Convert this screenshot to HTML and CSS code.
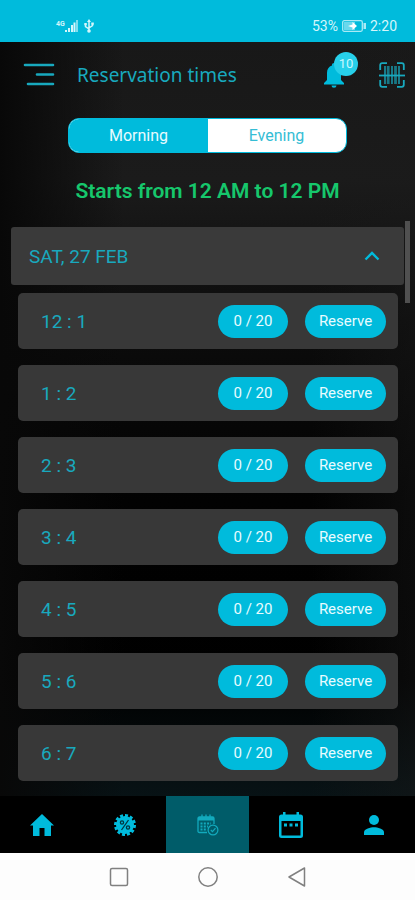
FILE: index.html
```html
<!DOCTYPE html>
<html lang="en">
<head>
<meta charset="utf-8">
<meta name="viewport" content="width=device-width, initial-scale=1">
<title>Reservation times</title>
<link rel="stylesheet" href="styles.css">
</head>
<body>
<div class="status">
  <div class="status-side">
    <span class="signal">
      <span class="net">4G</span>
      <svg width="13" height="12" viewBox="0 0 13 12" fill="currentColor"><path d="M0 10h2v2H0zM3 8h2v4H3zM6 5h2v7H6zM8.500 2.500h2v9.500h-2z"/><path d="M11 0h2v12h-2z" opacity=".6"/></svg>
    </span>
    <svg width="10" height="14" viewBox="0 0 10 14" fill="none" stroke="currentColor" stroke-width="1.500"><path d="M5 12V2M5 10L1.500 7.500V5M5 9l3.500-2.500V4"/><path d="M5 0l2 3H3z" fill="currentColor" stroke="none"/><circle cx="5" cy="12" r="1.800" fill="currentColor" stroke="none"/><path d="M.3 4h2.500v2.300H.3zM7.300 3.500h2.500v2.300H7.300z" fill="currentColor" stroke="none"/></svg>
  </div>
  <div class="status-side status-right">
    <span>53%</span>
    <svg width="24" height="12" viewBox="0 0 24 12"><rect x=".7" y=".7" width="19.600" height="10.600" rx="1.500" fill="none" stroke="currentColor" stroke-width="1.300" opacity=".8"/><path d="M2 2h11v8H2z" fill="currentColor" opacity=".5"/><path d="M21.500 3H24v6h-2.500z" fill="currentColor" opacity=".8"/><path d="M6 6l4.500-1.500V2L15 6l-4.500 4V7.500z" fill="#fff"/></svg>
    <span>2:20</span>
  </div>
</div>

<header class="bar">
  <button class="icon-btn" aria-label="Menu">
    <svg width="32" height="24" viewBox="0 0 32 24" stroke="currentColor" stroke-width="2.600" stroke-linecap="round"><path d="M2 2h28M14 11.500h16M5 21h25"/></svg>
  </button>
  <h1>Reservation times</h1>
  <button class="icon-btn bell" aria-label="Notifications">
    <svg width="20" height="25" viewBox="0 0 20 25" fill="currentColor"><path d="M10 0c-1.100 0-2 .8-2 1.800v.7C4.800 3.400 3 6.200 3 9.800V17L0 20v1.500h20V20l-3-3V9.800c0-3.600-1.800-6.400-5-7.300v-.7C12 .8 11.100 0 10 0zM7.500 22.500a2.500 2.300 0 0 0 5 0z"/></svg>
    <span class="badge">10</span>
  </button>
  <button class="icon-btn" aria-label="Scan code">
    <svg width="26" height="26" viewBox="0 0 26 26" fill="none" stroke="currentColor"><path d="M1.200 8V3.200q0-2 2-2H8M18 1.200h4.800q2 0 2 2V8M24.800 18v4.800q0 2-2 2H18M8 24.800H3.200q-2 0-2-2V18" stroke-width="1.800"/><path d="M6 4v18M13 4v18M20 4v18" stroke-width="1.700" opacity=".8"/><path d="M9.200 4v18M16.500 4v18" stroke-width="2.800" opacity=".65"/><path d="M0 13.500h26" stroke-width="1.800"/></svg>
  </button>
</header>

<main>
  <div class="toggle">
    <button class="on" aria-pressed="true">Morning</button>
    <button aria-pressed="false">Evening</button>
  </div>
  <p class="range">Starts from 12 AM to 12 PM</p>

  <section class="day">
    <button class="day-head" aria-expanded="true">
      <span>SAT, 27 FEB</span>
      <svg width="16" height="10" viewBox="0 0 16 10" fill="none" stroke="currentColor" stroke-width="2.400"><path d="M1.500 8.500L8 2l6.500 6.500"/></svg>
    </button>
    <ul class="slots">
      <li><span class="time">12 : 1</span><span class="pill count">0 / 20</span><button class="pill">Reserve</button></li>
      <li><span class="time">1 : 2</span><span class="pill count">0 / 20</span><button class="pill">Reserve</button></li>
      <li><span class="time">2 : 3</span><span class="pill count">0 / 20</span><button class="pill">Reserve</button></li>
      <li><span class="time">3 : 4</span><span class="pill count">0 / 20</span><button class="pill">Reserve</button></li>
      <li><span class="time">4 : 5</span><span class="pill count">0 / 20</span><button class="pill">Reserve</button></li>
      <li><span class="time">5 : 6</span><span class="pill count">0 / 20</span><button class="pill">Reserve</button></li>
      <li><span class="time">6 : 7</span><span class="pill count">0 / 20</span><button class="pill">Reserve</button></li>
    </ul>
    <span class="thumb"></span>
  </section>
</main>

<nav class="tabs">
  <a href="#home" aria-label="Home"><svg width="24" height="22" viewBox="0 0 24 22" fill="currentColor"><path d="M12 0L0 11.500h3V22h6.500v-8h5v8H21V11.500h3z"/></svg></a>
  <a href="#offers" aria-label="Offers"><svg width="22" height="22" viewBox="0 0 22 22"><circle cx="11" cy="11" r="9" fill="currentColor"/><circle cx="11" cy="11" r="9.500" fill="none" stroke="currentColor" stroke-width="3" pathLength="48" stroke-dasharray="2.400 1.600"/><g fill="none" stroke="#02363e" stroke-width="1.300"><path d="M14.500 6l-7 10"/><circle cx="8" cy="8.500" r="1.600"/><circle cx="14" cy="13.500" r="1.600"/></g></svg></a>
  <a href="#reservations" class="current" aria-label="Reservations" aria-current="page"><svg width="22" height="22" viewBox="0 0 22 22" fill="none" stroke="currentColor"><path d="M10 18.500H2.500Q1 18.500 1 17V4.500Q1 3 2.500 3h13Q17 3 17 4.500V10" stroke-width="1.300"/><path d="M1 3h16v3.500H1z" fill="currentColor" stroke="none"/><path d="M5 .5V4M9 .5V4M13 .5V4" stroke-width="1.300"/><path d="M3.500 9.500H14M3.500 12.500H11M3.500 15.500H10" stroke-width="1.800" stroke-dasharray="2 1.300"/><circle cx="16" cy="16" r="4.900" stroke-width="1.200"/><path d="M13.800 16l1.700 1.700 3-3.500" stroke-width="1.200"/></svg></a>
  <a href="#calendar" aria-label="Calendar"><svg width="24" height="26" viewBox="0 0 24 26" fill="currentColor"><path fill-rule="evenodd" d="M4 0h2.500v2.500h11V0H20v2.500h1.500A2.500 2.500 0 0 1 24 5v18.500a2.500 2.500 0 0 1-2.500 2.500h-19A2.500 2.500 0 0 1 0 23.500V5a2.500 2.500 0 0 1 2.500-2.500H4zM2.500 9v14.500h19V9z"/><path d="M5 11.500h3v3H5zM10.500 11.500h3v3h-3zM16 11.500h3v3h-3z"/></svg></a>
  <a href="#profile" aria-label="Profile"><svg width="20" height="20" viewBox="0 0 22 22" fill="currentColor"><circle cx="11" cy="5.500" r="5.500"/><path d="M0 22v-3c0-3.700 7.300-5.500 11-5.500s11 1.800 11 5.500v3z"/></svg></a>
</nav>

<div class="system">
  <button aria-label="Recent apps"><svg width="20" height="20" viewBox="0 0 20 20"><rect x="1.500" y="1.500" width="17" height="17" rx="1.500"/></svg></button>
  <button aria-label="Home screen"><svg width="20" height="20" viewBox="0 0 20 20"><circle cx="10" cy="10" r="9.200"/></svg></button>
  <button aria-label="Back"><svg width="20" height="20" viewBox="0 0 20 20"><path d="M17.500 1v18L2 10z" stroke-linejoin="round"/></svg></button>
</div>
</body>
</html>
```
FILE: styles.css
```css
:root {
  --cyan: #00bbdc;
  --teal: #18a9be;
  --card: #383838;
}

* {
  box-sizing: border-box;
}

body {
  margin: 0;
  min-height: 100vh;
  display: flex;
  flex-direction: column;
  font-family: Roboto, "Liberation Sans", sans-serif;
  color: var(--teal);
  background: linear-gradient(90deg, #080808, transparent 30%, transparent 75%, #1a1a1a66), linear-gradient(#181818 40px, #1b1b1b 180px, #0c0c0c 320px, #020202 500px, #000 680px, #081316 800px);
}

button {
  font: inherit;
  color: inherit;
  border: 0;
  padding: 0;
  background: none;
  cursor: pointer;
}

svg {
  display: block;
}

.status {
  height: 42px;
  padding: 10px 18px 0 56px;
  display: flex;
  align-items: center;
  justify-content: space-between;
  background: var(--cyan);
  color: #d4f6fb;
  font-size: 14px;
}

.status-side {
  display: flex;
  align-items: center;
  gap: 6px;
}

.status-right {
  gap: 4px;
}

.signal {
  display: flex;
}

.net {
  font-size: 7px;
  line-height: 8px;
  font-weight: 700;
}

.bar {
  height: 66px;
  padding: 0 10px 0 23px;
  display: flex;
  align-items: center;
  color: var(--teal);
}

.bar h1 {
  flex: 1;
  margin: 0 0 0 22px;
  font-family: "Noto Sans", sans-serif;
  font-size: 19px;
  font-weight: 400;
}

.icon-btn {
  color: var(--teal);
}

.bell {
  position: relative;
  margin-right: 35px;
  color: var(--cyan);
}

.badge {
  position: absolute;
  left: 10px;
  top: -11px;
  width: 24px;
  height: 24px;
  border-radius: 50%;
  background: #27d0ea;
  color: #c9f8ff;
  font-size: 13px;
  line-height: 24px;
}

main {
  flex: 1;
  padding-top: 10px;
}

.toggle {
  display: flex;
  width: 67%;
  height: 35px;
  margin: 0 auto;
  border: 1px solid var(--cyan);
  border-radius: 11px;
  overflow: hidden;
  background: #fff;
}

.toggle button {
  flex: 1;
  font-size: 16px;
  color: #35bdd5;
}

.toggle .on {
  background: var(--cyan);
  color: #e8fbff;
}

.range {
  margin: 26px 0 24px;
  text-align: center;
  font-size: 21px;
  line-height: 24px;
  font-weight: 600;
  color: #16c76c;
}

.day {
  position: relative;
  padding: 0 11px;
}

.day-head {
  width: 100%;
  height: 58px;
  padding: 0 24px 0 18px;
  display: flex;
  align-items: center;
  justify-content: space-between;
  background: #3a3a3a;
  border-radius: 3px;
  font-size: 19px;
}

.day-head svg {
  color: var(--cyan);
}

.thumb {
  position: absolute;
  top: -6px;
  right: 5px;
  width: 5px;
  height: 82px;
  background: #505050;
}

.slots {
  list-style: none;
  margin: 8px 0 0;
  padding: 0 6px 15px 7px;
  display: grid;
  gap: 16px;
}

.slots li {
  height: 56px;
  padding: 0 12px 0 23px;
  display: flex;
  align-items: center;
  gap: 17px;
  background: var(--card);
  border-radius: 5px;
}

.time {
  flex: 1;
  font-size: 19px;
}

.pill {
  width: 81px;
  height: 33px;
  border-radius: 17px;
  background: var(--cyan);
  color: #e8fbff;
  font-size: 15px;
  font-weight: 400;
  line-height: 33px;
  text-align: center;
}

.count {
  width: 70px;
}

.tabs {
  height: 57px;
  display: grid;
  grid-template-columns: repeat(5, 1fr);
  background: #000;
}

.tabs a {
  display: grid;
  place-items: center;
  color: var(--cyan);
}

.tabs .current {
  background: #005c69;
  color: #12aabd;
}

.system {
  height: 47px;
  display: flex;
  align-items: center;
  justify-content: center;
  gap: 69px;
  background: #fdfdfd;
}

.system svg {
  fill: none;
  stroke: #808080;
  stroke-width: 1.5px;
}
```
